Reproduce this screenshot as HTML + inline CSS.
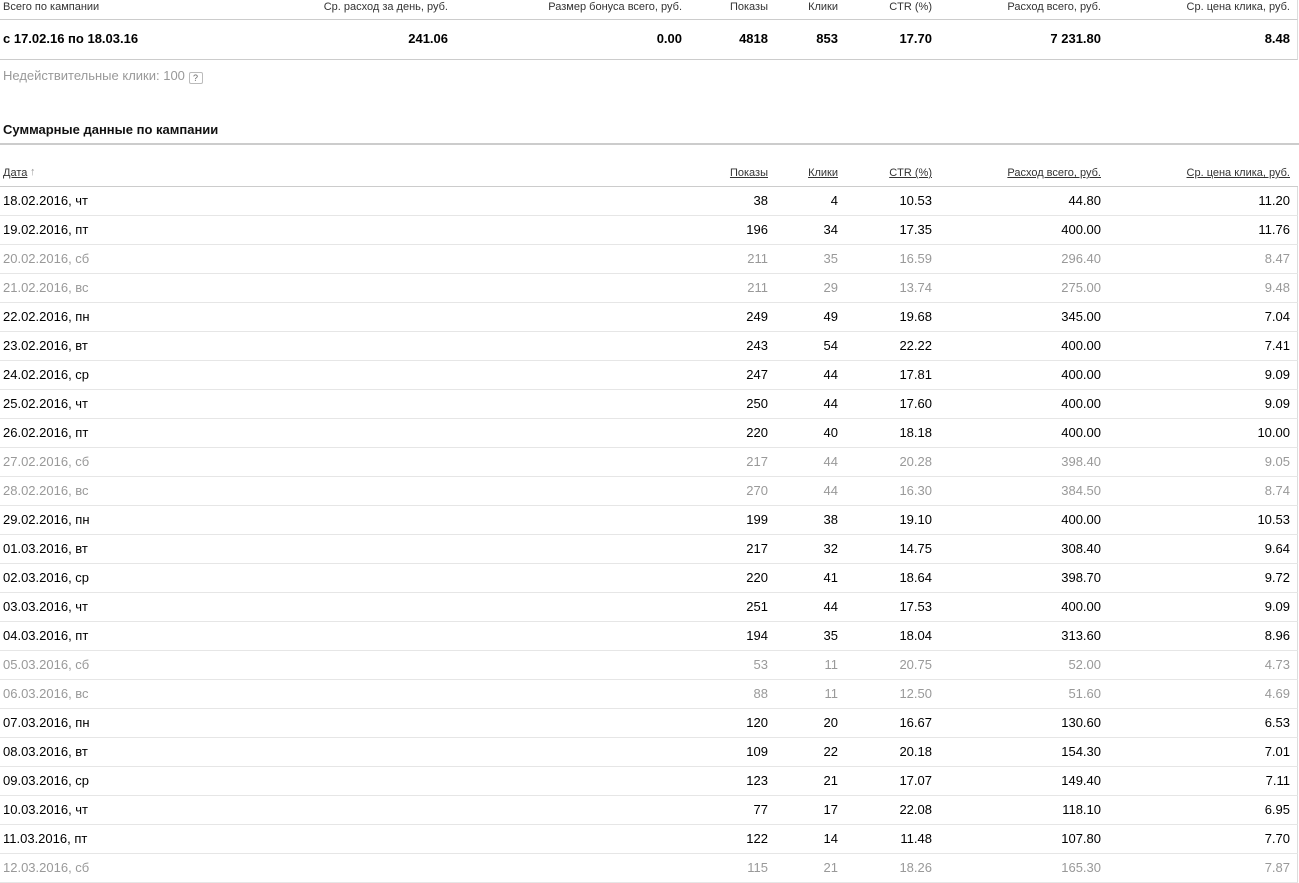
<!DOCTYPE html>
<html><head><meta charset="utf-8"><style>
*{margin:0;padding:0;box-sizing:border-box}
body{width:1299px;height:883px;overflow:hidden;background:#fff;font-family:"Liberation Sans",Arial,sans-serif;color:#000;position:relative}
.r{position:absolute;left:0;width:1298px;border-bottom:1px solid #e6e6e6;border-right:1px solid #ddd}
.r span{position:absolute;white-space:nowrap}
.h{font-size:11px;color:#333}
.d{height:29px;font-size:13px}
.d span{top:6px}
.g{color:#999}
.u span{text-decoration:underline}
</style></head><body>
<div class="r h" style="top:0;height:20px;border-bottom:1px solid #ccc">
<span style="left:3px;top:1px">Всего по кампании</span>
<span style="right:849px;top:1px">Ср. расход за день, руб.</span>
<span style="right:615px;top:1px">Размер бонуса всего, руб.</span>
<span style="right:529px;top:1px">Показы</span>
<span style="right:459px;top:1px">Клики</span>
<span style="right:365px;top:1px">CTR (%)</span>
<span style="right:196px;top:1px">Расход всего, руб.</span>
<span style="right:7px;top:1px">Ср. цена клика, руб.</span>
</div>
<div class="r" style="top:20px;height:40px;border-bottom:1px solid #ccc;font-size:13px;font-weight:bold">
<span style="left:3px;top:11px">с 17.02.16 по 18.03.16</span>
<span style="right:849px;top:11px">241.06</span>
<span style="right:615px;top:11px">0.00</span>
<span style="right:529px;top:11px">4818</span>
<span style="right:459px;top:11px">853</span>
<span style="right:365px;top:11px">17.70</span>
<span style="right:196px;top:11px">7 231.80</span>
<span style="right:7px;top:11px">8.48</span>
</div>
<div style="position:absolute;left:3px;top:68px;font-size:13px;color:#999">Недействительные клики: 100 <span style="display:inline-block;width:14px;height:12px;border:1px solid #bbb;border-radius:2px;font-size:9px;text-align:center;line-height:10px;color:#666;vertical-align:-1px">?</span></div>
<div style="position:absolute;left:3px;top:122px;font-size:13px;font-weight:bold;color:#111">Суммарные данные по кампании</div>
<div style="position:absolute;left:0;top:143px;width:1299px;height:2px;background:#ccc"></div>
<div class="r h u" style="top:145px;height:42px;border-bottom:1px solid #ccc;border-right:none">
<span style="left:3px;top:22px">Дата</span><span style="left:30px;top:21px;text-decoration:none;color:#999">↑</span>
<span style="right:530px;top:22px">Показы</span>
<span style="right:460px;top:22px">Клики</span>
<span style="right:366px;top:22px">CTR (%)</span>
<span style="right:197px;top:22px">Расход всего, руб.</span>
<span style="right:8px;top:22px">Ср. цена клика, руб.</span>
</div>
<div id="t"></div>
<script>
var rows=[["18.02.2016, чт",38,4,"10.53","44.80","11.20"],["19.02.2016, пт",196,34,"17.35","400.00","11.76"],["20.02.2016, сб",211,35,"16.59","296.40","8.47",1],["21.02.2016, вс",211,29,"13.74","275.00","9.48",1],["22.02.2016, пн",249,49,"19.68","345.00","7.04"],["23.02.2016, вт",243,54,"22.22","400.00","7.41"],["24.02.2016, ср",247,44,"17.81","400.00","9.09"],["25.02.2016, чт",250,44,"17.60","400.00","9.09"],["26.02.2016, пт",220,40,"18.18","400.00","10.00"],["27.02.2016, сб",217,44,"20.28","398.40","9.05",1],["28.02.2016, вс",270,44,"16.30","384.50","8.74",1],["29.02.2016, пн",199,38,"19.10","400.00","10.53"],["01.03.2016, вт",217,32,"14.75","308.40","9.64"],["02.03.2016, ср",220,41,"18.64","398.70","9.72"],["03.03.2016, чт",251,44,"17.53","400.00","9.09"],["04.03.2016, пт",194,35,"18.04","313.60","8.96"],["05.03.2016, сб",53,11,"20.75","52.00","4.73",1],["06.03.2016, вс",88,11,"12.50","51.60","4.69",1],["07.03.2016, пн",120,20,"16.67","130.60","6.53"],["08.03.2016, вт",109,22,"20.18","154.30","7.01"],["09.03.2016, ср",123,21,"17.07","149.40","7.11"],["10.03.2016, чт",77,17,"22.08","118.10","6.95"],["11.03.2016, пт",122,14,"11.48","107.80","7.70"],["12.03.2016, сб",115,21,"18.26","165.30","7.87",1]];
var rs=[529,459,365,196,7],h="";
rows.forEach(function(r,i){h+='<div class="r d'+(r[6]?' g':'')+'" style="top:'+(187+i*29)+'px"><span style="left:3px">'+r[0]+'</span>';for(var j=0;j<5;j++)h+='<span style="right:'+rs[j]+'px">'+r[j+1]+'</span>';h+='</div>';});
document.getElementById('t').innerHTML=h;
</script>
</body></html>
